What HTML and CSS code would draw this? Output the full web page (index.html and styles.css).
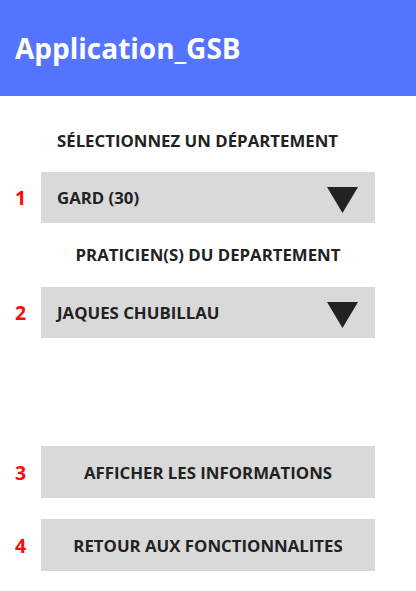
FILE: index.html
```html
<!DOCTYPE html>
<html lang="fr">
<head>
<meta charset="utf-8">
<title>Application_GSB</title>
<link rel="stylesheet" href="styles.css">
</head>
<body>
<header class="appbar"><h1 class="title">Application_GSB</h1></header>
<main class="content">
  <div class="label label1">SÉLECTIONNEZ UN DÉPARTEMENT</div>
  <div class="row">
    <span class="num">1</span>
    <div class="field select"><span>GARD (30)</span><svg class="arrow" viewBox="0 0 31 26"><polygon points="0,0 31,0 15.5,26" /></svg></div>
  </div>
  <div class="label label2">PRATICIEN(S) DU DEPARTEMENT</div>
  <div class="row">
    <span class="num">2</span>
    <div class="field select"><span>JAQUES CHUBILLAU</span><svg class="arrow" viewBox="0 0 31 26"><polygon points="0,0 31,0 15.5,26" /></svg></div>
  </div>
  <div class="row row3">
    <span class="num">3</span>
    <div class="field button">AFFICHER LES INFORMATIONS</div>
  </div>
  <div class="row row4">
    <span class="num">4</span>
    <div class="field button">RETOUR AUX FONCTIONNALITES</div>
  </div>
</main>
</body>
</html>
```
FILE: styles.css
```css
html, body { margin: 0; padding: 0; background: #fff; }
body { font-family: "Open Sans", "Noto Sans", sans-serif; color: #222; }
.appbar { background: #5374ff; height: 96px; display: flex; align-items: center; padding: 0 0 0 15px; box-sizing: border-box; }
.title { margin: 0; color: #fff; font-size: 28px; font-weight: 700; line-height: 38px; }
.content { display: flex; flex-direction: column; }
.label { font-size: 16.8px; font-weight: 700; text-align: center; margin-top: 33px; height: 23px; line-height: 23px; }
.label1 { padding-right: 21px; }
.label2 { margin-top: 20px; }
.row { display: flex; align-items: center; margin-top: 20px; }
.num { width: 41px; text-align: center; color: #ff0a0a; font-size: 19.5px; font-weight: 700; }
.field { width: 334px; height: 51px; background: #d9d9d9; box-sizing: border-box; display: flex; align-items: center; font-size: 16.8px; font-weight: 700; }
.select { justify-content: space-between; padding: 0 17px 0 16px; }
.arrow { width: 31px; height: 26px; fill: #222; margin-top: 5px; }
.button { justify-content: center; height: 52px; }
.label2 + .row { margin-top: 21px; }
.row.row3 { margin-top: 108px; }
.row.row4 { margin-top: 21px; }
```
